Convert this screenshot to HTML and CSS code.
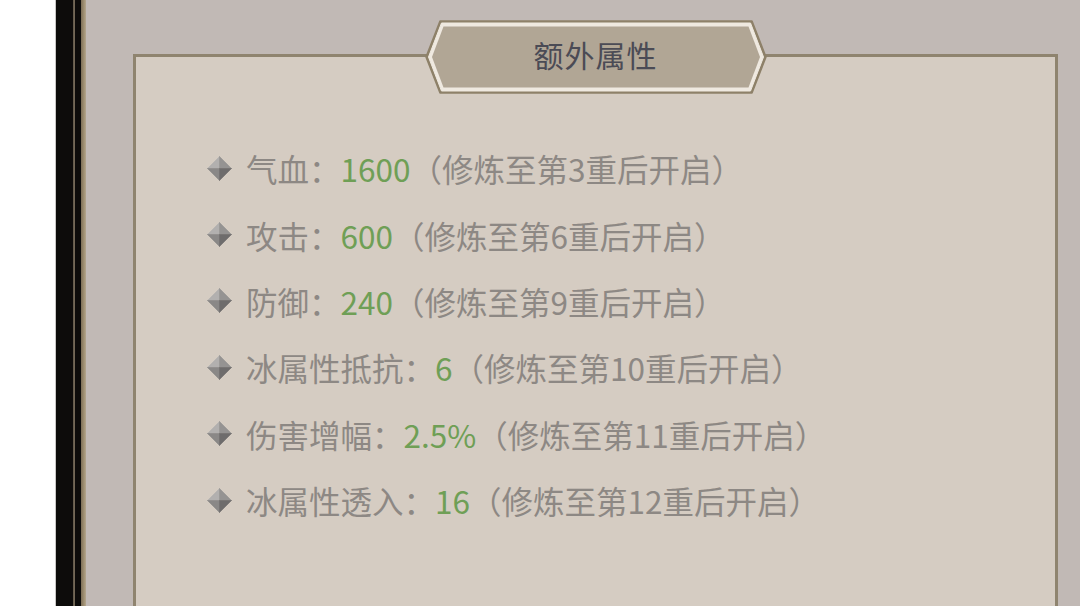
FILE: index.html
```html
<!doctype html>
<html lang="zh-CN">
<head>
    <meta charset="UTF-8">
    <title>额外属性</title>
    <link rel="stylesheet" href="styles.css">
</head>
<body>
<svg width="0" height="0" class="defs">
    <symbol id="gem" viewBox="0 0 24 24">
        <polygon points="12,0.5 12,12 0.5,12" fill="#b2b0af" stroke="#b2b0af" stroke-width="0.6" stroke-linejoin="round"/>
        <polygon points="12,0.5 23.5,12 12,12" fill="#959392" stroke="#959392" stroke-width="0.6" stroke-linejoin="round"/>
        <polygon points="0.5,12 12,12 12,23.5" fill="#8a8887" stroke="#8a8887" stroke-width="0.6" stroke-linejoin="round"/>
        <polygon points="23.5,12 12,23.5 12,12" fill="#6e6c6c" stroke="#6e6c6c" stroke-width="0.6" stroke-linejoin="round"/>
    </symbol>
</svg>
<div class="page">
    <div class="blank"></div>
    <div class="frame"></div>
    <div class="stage">
        <section class="panel">
            <div class="badge">
                <svg class="badge-bg" viewBox="0 0 342 74" width="342" height="74">
                    <polygon points="15,1 327,1 341,37 327,73 15,73 1,37" fill="#8e8169" stroke="#8e8169" stroke-width="1.5" stroke-linejoin="round"/>
                    <polygon points="16.5,3 325.5,3 338.5,37 325.5,71 16.5,71 3.5,37" fill="#efe9e0" stroke="#efe9e0" stroke-width="1" stroke-linejoin="round"/>
                    <polygon points="18.5,6.5 323.5,6.5 335,37 323.5,67.5 18.5,67.5 7,37" fill="#b1a695"/>
                </svg>
                <span class="badge-text">额外属性</span>
            </div>
            <ul class="attrs">
                <li><svg class="gem"><use href="#gem"/></svg><span>气血：</span><em>1600</em><span>（修炼至第3重后开启）</span></li>
                <li><svg class="gem"><use href="#gem"/></svg><span>攻击：</span><em>600</em><span>（修炼至第6重后开启）</span></li>
                <li><svg class="gem"><use href="#gem"/></svg><span>防御：</span><em>240</em><span>（修炼至第9重后开启）</span></li>
                <li><svg class="gem"><use href="#gem"/></svg><span>冰属性抵抗：</span><em>6</em><span>（修炼至第10重后开启）</span></li>
                <li><svg class="gem"><use href="#gem"/></svg><span>伤害增幅：</span><em>2.5%</em><span>（修炼至第11重后开启）</span></li>
                <li><svg class="gem"><use href="#gem"/></svg><span>冰属性透入：</span><em>16</em><span>（修炼至第12重后开启）</span></li>
            </ul>
        </section>
    </div>
</div>
</body>
</html>
```

FILE: styles.css
```css
*{
    padding: 0;
    margin: 0;
    box-sizing: border-box;
}
html, body{
    width: 1080px;
    height: 606px;
    overflow: hidden;
    background: #ffffff;
    font-family: "Noto Sans CJK SC", "Noto Sans", sans-serif;
}
li{
    list-style: none;
}
.defs{
    position: absolute;
}
.page{
    display: flex;
    height: 606px;
}
.blank{
    width: 55px;
    flex: none;
}
.frame{
    width: 31px;
    flex: none;
    background: linear-gradient(to right,
        #c9c7c6 0, #c9c7c6 1px,
        #0d0c0b 1px, #0d0c0b 18px,
        #5e5648 18px, #7a6e5c 20px,
        #0d0c0b 20px, #0d0c0b 26px,
        #7d6f58 26px, #a09072 29px, #b3a68e 31px);
}
.stage{
    flex: 1;
    display: flex;
    flex-direction: column;
    height: 606px;
    overflow: hidden;
    background: #c1b9b5;
    padding: 54px 22px 0 47px;
}
.panel{
    position: relative;
    flex: 1;
    background: #d5ccc2;
    border: 3px solid #8f846f;
    border-bottom: none;
    padding: 78px 0 0 71px;
}
.badge{
    position: absolute;
    left: 50%;
    top: -37px;
    width: 342px;
    height: 74px;
    margin-left: -171px;
    display: flex;
    align-items: center;
    justify-content: center;
}
.badge-bg{
    position: absolute;
    left: 0;
    top: 0;
}
.badge-text{
    position: relative;
    top: -3px;
    font-size: 30px;
    color: #4b4b55;
    letter-spacing: 1px;
}
.attrs li{
    display: flex;
    align-items: center;
    height: 66.4px;
    font-size: 31.5px;
    color: #8d8884;
    white-space: nowrap;
}
.attrs .gem{
    width: 25px;
    height: 25px;
    margin-right: 14px;
    flex: none;
}
.attrs em{
    font-style: normal;
    color: #6f9f56;
}
```
